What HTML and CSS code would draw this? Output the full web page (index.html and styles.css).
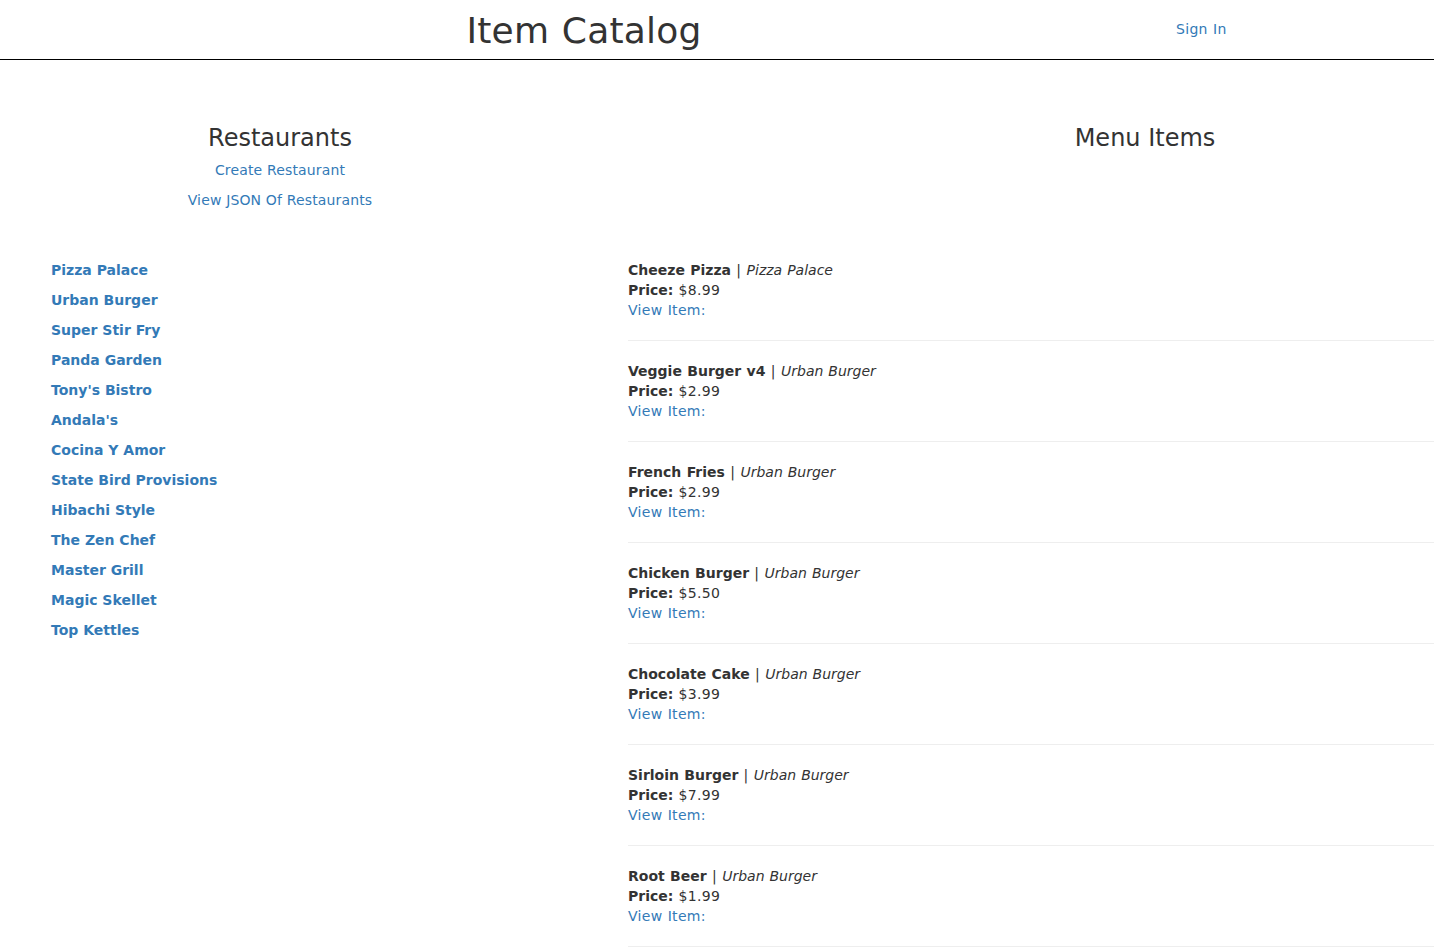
FILE: index.html
```html
<!DOCTYPE html>
<html lang="en">
<head>
<meta charset="utf-8">
<title>Item Catalog</title>
<link rel="stylesheet" href="styles.css">
</head>
<body>
<header class="site-header">
  <div class="brand"><h1 class="brand-title">Item Catalog</h1></div>
  <a class="signin" href="#">Sign In</a>
</header>
<main class="page">
  <section class="headings">
    <div class="left-head">
      <h3 class="section-title">Restaurants</h3>
      <p class="action"><a href="#">Create Restaurant</a></p>
      <p class="action"><a href="#">View JSON Of Restaurants</a></p>
    </div>
    <div class="right-head">
      <h3 class="section-title">Menu Items</h3>
    </div>
  </section>
  <section class="lists">
    <div class="restaurants">
      <div class="restaurant"><a href="#">Pizza Palace</a></div>
      <div class="restaurant"><a href="#">Urban Burger</a></div>
      <div class="restaurant"><a href="#">Super Stir Fry</a></div>
      <div class="restaurant"><a href="#">Panda Garden</a></div>
      <div class="restaurant"><a href="#">Tony's Bistro</a></div>
      <div class="restaurant"><a href="#">Andala's</a></div>
      <div class="restaurant"><a href="#">Cocina Y Amor</a></div>
      <div class="restaurant"><a href="#">State Bird Provisions</a></div>
      <div class="restaurant"><a href="#">Hibachi Style</a></div>
      <div class="restaurant"><a href="#">The Zen Chef</a></div>
      <div class="restaurant"><a href="#">Master Grill</a></div>
      <div class="restaurant"><a href="#">Magic Skellet</a></div>
      <div class="restaurant"><a href="#">Top Kettles</a></div>
    </div>
    <div class="items">
      <div class="item">
        <div><b>Cheeze Pizza</b> | <i>Pizza Palace</i></div>
        <div><b>Price:</b> $8.99</div>
        <div><a href="#">View Item:</a></div>
      </div>
      <hr class="sep">
      <div class="item">
        <div><b>Veggie Burger v4</b> | <i>Urban Burger</i></div>
        <div><b>Price:</b> $2.99</div>
        <div><a href="#">View Item:</a></div>
      </div>
      <hr class="sep">
      <div class="item">
        <div><b>French Fries</b> | <i>Urban Burger</i></div>
        <div><b>Price:</b> $2.99</div>
        <div><a href="#">View Item:</a></div>
      </div>
      <hr class="sep">
      <div class="item">
        <div><b>Chicken Burger</b> | <i>Urban Burger</i></div>
        <div><b>Price:</b> $5.50</div>
        <div><a href="#">View Item:</a></div>
      </div>
      <hr class="sep">
      <div class="item">
        <div><b>Chocolate Cake</b> | <i>Urban Burger</i></div>
        <div><b>Price:</b> $3.99</div>
        <div><a href="#">View Item:</a></div>
      </div>
      <hr class="sep">
      <div class="item">
        <div><b>Sirloin Burger</b> | <i>Urban Burger</i></div>
        <div><b>Price:</b> $7.99</div>
        <div><a href="#">View Item:</a></div>
      </div>
      <hr class="sep">
      <div class="item">
        <div><b>Root Beer</b> | <i>Urban Burger</i></div>
        <div><b>Price:</b> $1.99</div>
        <div><a href="#">View Item:</a></div>
      </div>
      <hr class="sep">
    </div>
  </section>
</main>
</body>
</html>
```

FILE: styles.css
```css
* { box-sizing: border-box; }
html, body {
  margin: 0;
  padding: 0;
  background: #fff;
}
body {
  font-family: "DejaVu Sans", Verdana, sans-serif;
  font-size: 14px;
  line-height: 20px;
  color: #333;
  letter-spacing: 0.3px;
  word-spacing: 0.5px;
  overflow-x: hidden;
}
a {
  color: #337ab7;
  text-decoration: none;
}
b, i {
  letter-spacing: 0;
}
.site-header {
  display: flex;
  align-items: flex-start;
  height: 60px;
  border-bottom: 1px solid #000;
}
.brand {
  width: 1168px;
  text-align: center;
  padding-top: 11px;
}
.brand-title {
  margin: 0;
  font-size: 36px;
  font-weight: 500;
  line-height: 39.6px;
  letter-spacing: 0.2px;
  word-spacing: 1px;
  color: #333;
}
.signin {
  margin-left: 8px;
  padding-top: 19px;
}
.headings {
  display: flex;
  padding-top: 65px;
}
.left-head {
  width: 560px;
  text-align: center;
}
.right-head {
  width: 578px;
  margin-left: 296px;
  text-align: center;
}
.section-title {
  margin: 0 0 9px;
  font-size: 24px;
  font-weight: 500;
  line-height: 26.4px;
  letter-spacing: 0;
  word-spacing: 0;
  color: #333;
}
.action {
  margin: 0 0 10px;
  letter-spacing: 0.15px;
  word-spacing: 0;
}
.lists {
  display: flex;
  margin-top: 40px;
}
.restaurants {
  width: 628px;
  padding-left: 51px;
}
.restaurant {
  margin-bottom: 10px;
  font-weight: bold;
  letter-spacing: 0;
  word-spacing: 0;
}
.items {
  flex: 1;
}
.sep {
  margin: 20px 0;
  border: 0;
  border-top: 1px solid #eee;
  height: 0;
}
```
